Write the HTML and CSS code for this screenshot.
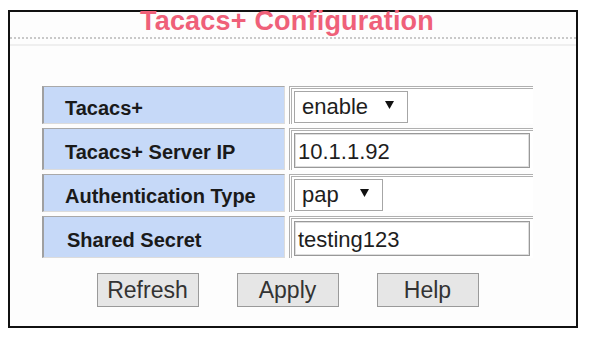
FILE: index.html
```html
<!DOCTYPE html>
<html lang="en">
<head>
    <meta charset="UTF-8">
    <title>Tacacs+ Configuration</title>
    <link rel="stylesheet" href="styles.css">
</head>
<body>
    <div class="frame">
        <h1 class="title">Tacacs+ Configuration</h1>
        <div class="rule-dotted"></div>
        <div class="rule-solid"></div>

        <div class="form">
            <div class="grid">
                <div class="label row-short">Tacacs+</div>
                <div class="value row-short">
                    <div class="select select-wide">
                        <span>enable</span>
                        <svg class="arrow" width="9" height="8" viewBox="0 0 9 8"><path d="M0 0h9L4.5 8z" fill="#111"/></svg>
                    </div>
                </div>

                <div class="label row-tall">Tacacs+ Server IP</div>
                <div class="value row-tall">
                    <div class="input">10.1.1.92</div>
                </div>

                <div class="label row-short">Authentication Type</div>
                <div class="value row-short">
                    <div class="select select-narrow">
                        <span>pap</span>
                        <svg class="arrow" width="9" height="8" viewBox="0 0 9 8"><path d="M0 0h9L4.5 8z" fill="#111"/></svg>
                    </div>
                </div>

                <div class="label row-tall label-shift">Shared Secret</div>
                <div class="value row-tall">
                    <div class="input">testing123</div>
                </div>
            </div>

            <div class="buttons">
                <button class="btn">Refresh</button>
                <button class="btn">Apply</button>
                <button class="btn">Help</button>
            </div>
        </div>
    </div>
</body>
</html>
```

FILE: styles.css
```css
* {
    margin: 0;
    padding: 0;
    box-sizing: border-box;
}

body {
    font-family: 'Liberation Sans', Arial, sans-serif;
    background: #fff;
}

.frame {
    margin: 10px 0 0 8px;
    width: 570px;
    height: 318px;
    border: 2px solid #111;
    background: #fdfdfd;
}

.title {
    font-size: 27px;
    line-height: 18px;
    height: 18px;
    font-weight: bold;
    color: #ef6079;
    text-align: center;
    margin-left: -12px;
    letter-spacing: 0.2px;
}

.rule-dotted {
    margin-top: 7px;
    border-top: 2px dotted #c9c9c9;
}

.rule-solid {
    margin-top: 5px;
    border-top: 2px solid #efefef;
}

.form {
    width: 491px;
    margin: 40px 0 0 32px;
}

.grid {
    display: grid;
    grid-template-columns: 243px 244px;
    column-gap: 4px;
    row-gap: 4px;
}

.row-short {
    height: 38px;
}

.row-tall {
    height: 42px;
}

.label {
    background: #c6d9f8;
    border-top: 1px solid #a9a9a9;
    border-left: 2px solid #a0a0a0;
    border-right: 1px solid #dcdcdc;
    border-bottom: 1px solid #dcdcdc;
    padding: 7px 0 0 21px;
    font-size: 20px;
    font-weight: bold;
    color: #1a1a1a;
    display: flex;
    align-items: center;
}

.label-shift {
    padding-left: 23px;
}

.value {
    background: #fff;
    border-top: 3px double #b0b0b0;
    border-left: 3px double #b0b0b0;
    padding-left: 2px;
    display: flex;
    align-items: center;
}

.select {
    height: 32px;
    border: 1px solid #a6a6a6;
    background: #fff;
    display: flex;
    align-items: center;
    justify-content: space-between;
    padding: 0 13px 0 7px;
    font-size: 22px;
    color: #1e1e1e;
}

.select-wide {
    width: 114px;
}

.select-narrow {
    width: 89px;
}

.arrow {
    margin-top: -3px;
}

.input {
    width: 236px;
    height: 35px;
    border: 1px solid #999;
    box-shadow: inset 1px 1px 0 #dedede, inset -1px -1px 0 #dedede;
    background: #fff;
    padding: 2px 0 0 3px;
    display: flex;
    align-items: center;
    font-size: 22px;
    color: #1e1e1e;
}

.buttons {
    display: flex;
    justify-content: center;
    gap: 38px;
    margin-top: 15px;
}

.btn {
    width: 102px;
    height: 34px;
    background: #e6e6e6;
    border: 1px solid #9a9a9a;
    font-family: 'Liberation Sans', Arial, sans-serif;
    font-size: 23px;
    color: #333;
}
```
